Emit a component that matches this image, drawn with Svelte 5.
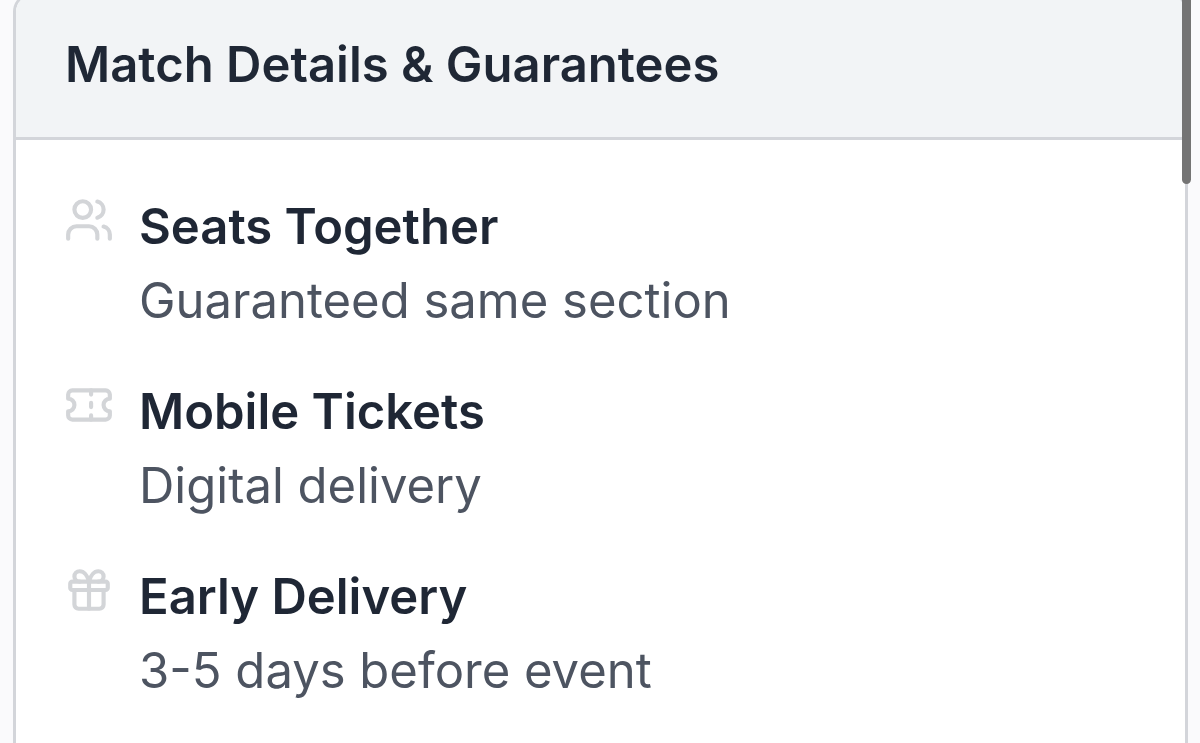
<script>
  const items = [
    { icon: 'users', title: 'Seats Together', text: 'Guaranteed same section' },
    { icon: 'ticket', title: 'Mobile Tickets', text: 'Digital delivery' },
    { icon: 'gift', title: 'Early Delivery', text: '3-5 days before event' }
  ];
</script>

<div class="page">
  <section class="card">
    <header><h2>Match Details &amp; Guarantees</h2></header>
    <ul>
      {#each items as item}
        <li>
          <svg viewBox="0 0 24 24" aria-hidden="true">
            {#if item.icon === 'users'}
              <path d="M16 21v-2a4 4 0 0 0-4-4H6a4 4 0 0 0-4 4v2" />
              <circle cx="9" cy="7" r="4" />
              <path d="M22 21v-2a4 4 0 0 0-3-3.87" />
              <path d="M16 3.13a4 4 0 0 1 0 7.75" />
            {:else if item.icon === 'ticket'}
              <path d="M2 9a3 3 0 0 1 0 6v2a2 2 0 0 0 2 2h16a2 2 0 0 0 2-2v-2a3 3 0 0 1 0-6V7a2 2 0 0 0-2-2H4a2 2 0 0 0-2 2Z" />
              <path d="M13 5v2M13 17v2M13 11v2" />
            {:else}
              <rect x="3" y="8" width="18" height="4" rx="1" />
              <path d="M12 8v13" />
              <path d="M19 12v7a2 2 0 0 1-2 2H7a2 2 0 0 1-2-2v-7" />
              <path d="M7.5 8a2.5 2.5 0 0 1 0-5A4.8 8 0 0 1 12 8a4.8 8 0 0 1 4.5-5 2.5 2.5 0 0 1 0 5" />
            {/if}
          </svg>
          <div>
            <h3>{item.title}</h3>
            <p>{item.text}</p>
          </div>
        </li>
      {/each}
    </ul>
  </section>
  <div class="thumb"></div>
</div>

<style>
  :global(body) {
    margin: 0;
    background: #fafafc;
    font-family: Inter, sans-serif;
  }
  .page {
    position: relative;
    height: 100vh;
    overflow: hidden;
    padding: 0 12px 0 13px;
    box-sizing: border-box;
  }
  .card {
    box-sizing: border-box;
    min-height: calc(100vh + 40px);
    margin-top: -8px;
    background: #fff;
    border: 3px solid #d3d5da;
    border-radius: 20px;
    overflow: hidden;
  }
  header {
    padding: 36px 49px 38px;
    background: #f2f4f6;
    border-bottom: 3px solid #d3d5da;
  }
  h2, h3, p {
    margin: 0;
    font-size: 49px;
    line-height: 74px;
  }
  h2 { line-height: 68px; }
  h2, h3 {
    font-weight: 600;
    color: #1f2735;
  }
  p { color: #4d5461; }
  ul {
    list-style: none;
    margin: 0;
    padding: 50px 48px;
    display: grid;
    gap: 37px;
  }
  li {
    display: flex;
    gap: 25px;
  }
  svg {
    flex: none;
    width: 50px;
    height: 50px;
    margin-top: 5px;
    fill: none;
    stroke: #d3d5d8;
    stroke-width: 2;
    stroke-linecap: round;
    stroke-linejoin: round;
  }
  .thumb {
    position: absolute;
    top: -8px;
    right: 9px;
    width: 9px;
    height: 192px;
    border-radius: 5px;
    background: #747474;
  }
</style>
